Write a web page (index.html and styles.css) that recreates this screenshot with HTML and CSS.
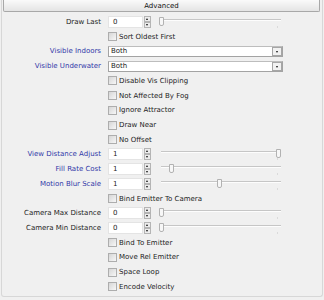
FILE: index.html
```html
<!DOCTYPE html>
<html>
<head>
<meta charset="utf-8">
<link rel="stylesheet" href="styles.css">
</head>
<body>
<div class="panel">
  <div class="header">Advanced</div>
  <div class="grid">
    <div class="lbl">Draw Last</div>
    <div class="ctl"><div class="field">0</div><div class="spin"><span class="up"></span><span class="dn"></span></div><div class="slider"><span class="thumb" style="left:2px"></span></div></div>

    <div class="ctl cbrow"><span class="cb"></span>Sort Oldest First</div>

    <div class="lbl blue">Visible Indoors</div>
    <div class="ctl"><div class="select">Both<span class="btn"></span></div></div>

    <div class="lbl blue">Visible Underwater</div>
    <div class="ctl"><div class="select">Both<span class="btn"></span></div></div>

    <div class="ctl cbrow"><span class="cb"></span>Disable Vis Clipping</div>
    <div class="ctl cbrow"><span class="cb"></span>Not Affected By Fog</div>
    <div class="ctl cbrow"><span class="cb"></span>Ignore Attractor</div>
    <div class="ctl cbrow"><span class="cb"></span>Draw Near</div>
    <div class="ctl cbrow"><span class="cb"></span>No Offset</div>

    <div class="lbl blue">View Distance Adjust</div>
    <div class="ctl"><div class="field">1</div><div class="spin"><span class="up"></span><span class="dn"></span></div><div class="slider"><span class="thumb" style="left:119px"></span></div></div>

    <div class="lbl blue">Fill Rate Cost</div>
    <div class="ctl"><div class="field">1</div><div class="spin"><span class="up"></span><span class="dn"></span></div><div class="slider"><span class="thumb" style="left:12px"></span></div></div>

    <div class="lbl blue">Motion Blur Scale</div>
    <div class="ctl"><div class="field">1</div><div class="spin"><span class="up"></span><span class="dn"></span></div><div class="slider"><span class="thumb" style="left:60px"></span></div></div>

    <div class="ctl cbrow"><span class="cb"></span>Bind Emitter To Camera</div>

    <div class="lbl">Camera Max Distance</div>
    <div class="ctl"><div class="field">0</div><div class="spin"><span class="up"></span><span class="dn"></span></div><div class="slider"><span class="thumb" style="left:2px"></span></div></div>

    <div class="lbl">Camera Min Distance</div>
    <div class="ctl"><div class="field">0</div><div class="spin"><span class="up"></span><span class="dn"></span></div><div class="slider"><span class="thumb" style="left:2px"></span></div></div>

    <div class="ctl cbrow"><span class="cb"></span>Bind To Emitter</div>
    <div class="ctl cbrow"><span class="cb"></span>Move Rel Emitter</div>
    <div class="ctl cbrow"><span class="cb"></span>Space Loop</div>
    <div class="ctl cbrow"><span class="cb"></span>Encode Velocity</div>
  </div>
</div>
</body>
</html>
```
FILE: styles.css
```css
html, body {
  margin: 0;
  padding: 0;
}
body {
  background: #f0f0f0;
  font-family: "DejaVu Sans", sans-serif;
  font-size: 7px;
  color: #1c1c1c;
  width: 324px;
  height: 300px;
  overflow: hidden;
}
.panel {
  margin: 0 1px;
  height: 297px;
  box-sizing: border-box;
  border: 1px solid #d7d7d7;
  border-top: none;
  border-radius: 0 0 3px 3px;
}
.header {
  margin: 0 2px 0 1px;
  height: 12px;
  box-sizing: border-box;
  border: 1px solid #a8a8a8;
  border-top: none;
  border-radius: 0 0 2px 2px;
  background: linear-gradient(#fafafa, #e4e4e4);
  text-align: center;
  padding-top: 2px;
  line-height: 9px;
  color: #111;
}
.grid {
  display: grid;
  grid-template-columns: 99px 175px;
  column-gap: 7px;
  grid-auto-rows: 14.72px;
  align-items: center;
  padding-top: 2.64px;
}
.lbl {
  text-align: right;
  white-space: nowrap;
}
.lbl.blue {
  color: #3038a8;
}
.ctl {
  display: flex;
  align-items: center;
  height: 100%;
  white-space: nowrap;
}
.cbrow {
  grid-column: 2;
}
.cb {
  width: 9px;
  height: 9px;
  box-sizing: border-box;
  border: 1px solid #adadad;
  background: linear-gradient(135deg, #d6d6d6, #f7f7f7);
  margin-right: 2px;
  flex: none;
}
.field {
  width: 35px;
  height: 12px;
  box-sizing: border-box;
  background: #fff;
  border: 1px solid #e4e4e4;
  padding-left: 4px;
  line-height: 10px;
  flex: none;
}
.spin {
  margin-left: 1px;
  width: 7px;
  height: 12px;
  display: flex;
  flex-direction: column;
  justify-content: space-between;
  flex: none;
}
.spin span {
  position: relative;
  height: 6px;
  box-sizing: border-box;
  border: 1px solid #b4b4b4;
  background: #ececec;
}
.spin span::after {
  content: "";
  position: absolute;
  left: 1px;
  width: 0;
  height: 0;
  border-left: 1.5px solid transparent;
  border-right: 1.5px solid transparent;
}
.spin .up::after {
  top: 1px;
  border-bottom: 2px solid #111;
}
.spin .dn::after {
  top: 1px;
  border-top: 2px solid #111;
}
.slider {
  position: relative;
  flex: 1;
  height: 100%;
  margin-left: 6px;
  margin-right: 2px;
}
.slider::before {
  content: "";
  position: absolute;
  left: 4px;
  right: 0;
  top: 4px;
  height: 1px;
  background: #c6c6c6;
  border-bottom: 1px solid #fdfdfd;
}
.slider::after {
  content: "";
  position: absolute;
  right: 3px;
  top: 11px;
  width: 1px;
  height: 2px;
  background: #dadada;
}
.thumb {
  position: absolute;
  top: 2px;
  width: 5px;
  height: 9px;
  box-sizing: border-box;
  border: 1px solid #b2b2b2;
  border-bottom-left-radius: 2px;
  border-bottom-right-radius: 2px;
  background: #f7f7f7;
  z-index: 1;
}
.select {
  width: 175px;
  height: 11px;
  box-sizing: border-box;
  border: 1px solid #a3a3a3;
  border-top-color: #bdbdbd;
  background: #fff;
  display: flex;
  align-items: center;
  padding-left: 2px;
  line-height: 9px;
}
.btn {
  position: relative;
  margin-left: auto;
  margin-right: 0;
  width: 10px;
  height: 9px;
  box-sizing: border-box;
  border: 1px solid #a6a6a6;
  background: #f1f1f1;
}
.btn::after {
  content: "";
  position: absolute;
  left: 2.5px;
  top: 3px;
  border-left: 1.5px solid transparent;
  border-right: 1.5px solid transparent;
  border-top: 2px solid #111;
}
```
